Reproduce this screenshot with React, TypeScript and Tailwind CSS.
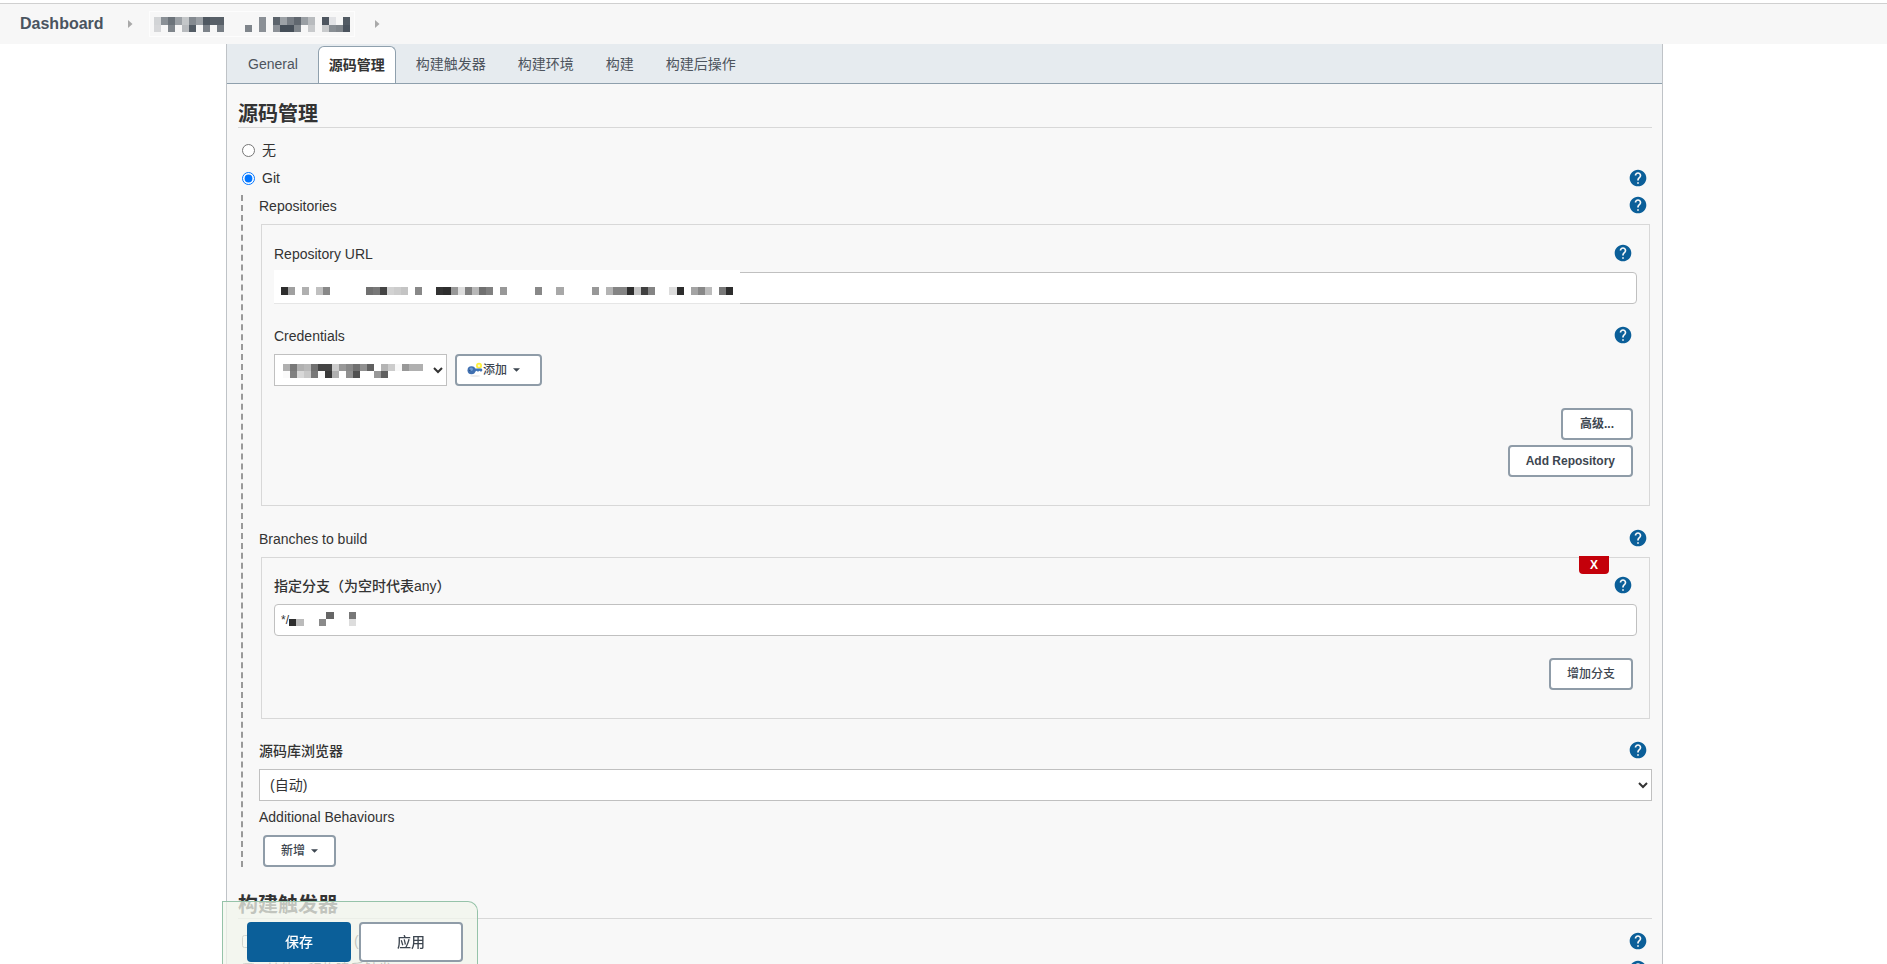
import React, { useState } from "react";
import { MdHelp } from "react-icons/md";

type Cell = [col: number, row: number, color: string];

const tabs = ["General", "源码管理", "构建触发器", "构建环境", "构建", "构建后操作"];

// "_" leaves a cell empty, everything else is a hex grey (or full hex colour)
const toCells = (rows: string[]): Cell[] =>
  rows.flatMap((row, r) =>
    row
      .split(" ")
      .map((c, i): Cell => [i, r, c])
      .filter(([, , c]) => c !== "_")
      .map(([i, y, c]): Cell => [i, y, c.length === 2 ? `#${c}${c}${c}` : `#${c}`])
  );

const projectCells = toCells([
  "d2d4d6 8a9096 6c737a 9ca1a6 c4c7c9 848a90 9ca1a6 4f5861 586068 586068 _ _ _ _ _ 8b9096 _ 5c646c 9ca1a6 787e85 60676f 9a9fa4 b8bbbe _ 4e5660 e2e3e6 _ 525b64",
  "d6d7d9 _ 80868c _ b8bbbe 535c65 _ 7c8289 _ 777e85 _ _ _ 7f858b _ 8b9096 _ 8c9197 454e58 454e58 80868c _ c8cacc _ c8cacc 888e94 80868c 4a535d",
]);

const urlCells = toCells([
  "2d a0 _ b0 _ c0 88 _ _ _ _ _ 70 78 44 d2 cc c4 _ 88 _ _ 33 2d 98 dd 80 b8 70 80 _ 98 _ _ _ _ 88 _ _ a8 _ _ _ _ 98 _ b4 84 84 2d c4 40 84 _ _ dc 2d _ a4 88 bc _ 78 2d",
]);

const credentialCells = toCells([
  "b0 78 b0 b8 70 44 44 cc 98 88 70 90 60 _ b4 cc f8 98 b0 b0",
  "fa 80 d8 c8 78 fa 38 b0 _ 90 50 _ _ 98 60",
]);

const branchCells = toCells(["_ _ _ _ _ 66 _ _ 77", "2d bb _ _ 8a _ _ _ dd"]);

const Mosaic: React.FC<{
  cells: Cell[];
  cols: number;
  rows: number;
  className: string;
}> = ({ cells, cols, rows, className }) => (
  <svg
    className={className}
    viewBox={`0 0 ${cols} ${rows}`}
    preserveAspectRatio="none"
    shapeRendering="crispEdges"
    aria-hidden="true"
  >
    {cells.map(([x, y, fill]) => (
      <rect key={`${x}-${y}`} x={x} y={y} width="1" height="1" fill={fill} />
    ))}
  </svg>
);

const HelpButton: React.FC<{ topic: string }> = ({ topic }) => (
  <button type="button" aria-label={`Help: ${topic}`} className="mr-1 text-[#0b5f99]">
    <MdHelp size={20} />
  </button>
);

const Caret: React.FC = () => (
  <svg width="7" height="4" viewBox="0 0 8 4" aria-hidden="true">
    <path d="M0 0h8L4 4z" fill="currentColor" />
  </svg>
);

const Chevron: React.FC = () => (
  <svg width="5" height="8" viewBox="0 0 5 8" aria-hidden="true">
    <path d="M0 0l4.5 4L0 8z" fill="#a9a9a9" />
  </svg>
);

const KeyIcon: React.FC = () => (
  <svg width="16" height="16" viewBox="0 0 16 16" aria-hidden="true">
    <ellipse cx="8" cy="14" rx="5" ry="1" fill="#ececec" />
    <circle cx="12" cy="3.8" r="3" fill="#fff03c" />
    <circle cx="12" cy="3.8" r="1.2" fill="#fffbd0" />
    <path d="M6 6.5h8.5l1 1.5-1 1.5h-1l-1-.8-1 .8h-1l-1-.8-1 .8H6z" fill="#3f74b8" />
    <circle cx="4.5" cy="8.3" r="4" fill="#3f6fb0" />
    <circle cx="4.2" cy="7.2" r="1.8" fill="#6f9bd2" />
    <circle cx="2.8" cy="8.3" r=".8" fill="#24497c" />
  </svg>
);

const buttonClass =
  "flex h-8 items-center rounded border-2 border-[#8f9ca8] bg-white text-xs text-[#3d4650]";

const Field: React.FC<{
  label: string;
  htmlFor?: string;
  help?: boolean;
  className?: string;
}> = ({ label, htmlFor, help = true, className = "" }) => (
  <div className={`mb-[7px] flex h-[22px] items-start justify-between leading-[22px] ${className}`}>
    {htmlFor ? (
      <label htmlFor={htmlFor} className="font-medium">
        {label}
      </label>
    ) : (
      <span className="font-medium">{label}</span>
    )}
    {help && <HelpButton topic={label} />}
  </div>
);

const SectionTitle: React.FC<{ children: React.ReactNode }> = ({ children }) => (
  <h2 className="mb-2 border-b border-[#d8d8d8] pt-[18px] pb-px text-xl leading-6 font-bold">
    {children}
  </h2>
);

export default function App() {
  const [activeTab, setActiveTab] = useState(1);
  const [scm, setScm] = useState("git");

  return (
    <div className="h-screen overflow-hidden bg-white font-['Liberation_Sans','Noto_Sans_CJK_SC',sans-serif] text-sm text-[#333]">
      <nav className="mt-[3px] flex h-[41px] items-center border-t border-[#d0d0d0] bg-[#f7f7f7] pl-5">
        <a href="#" className="text-base font-bold text-[#4a545f]">
          Dashboard
        </a>
        <span className="ml-6">
          <Chevron />
        </span>
        <a
          href="#"
          aria-label="Project"
          className="mr-5 ml-4 flex h-[26px] items-center border border-[#fdfdfd] px-1"
        >
          <Mosaic cells={projectCells} cols={28} rows={2} className="h-[15px] w-[196px]" />
        </a>
        <Chevron />
      </nav>

      <main className="mr-[224px] ml-[226px] border-x border-[#bfc3c7] bg-[#f8f8f8]">
        <div className="flex h-10 items-end border-b border-[#8fa0ad] bg-[#e6ebef] pl-[5px]">
          {tabs.map((tab, i) => (
            <button
              key={tab}
              type="button"
              onClick={() => setActiveTab(i)}
              className={
                i === activeTab
                  ? "mx-1 h-[37px] rounded-t-md border border-b-0 border-[#8fa0ad] bg-white px-[10px] font-bold"
                  : "h-[37px] px-4 pb-[2px] text-[#4d545d]"
              }
            >
              {tab}
            </button>
          ))}
        </div>

        <form className="pr-[10px] pl-[11px]" onSubmit={(e) => e.preventDefault()}>
          <SectionTitle>源码管理</SectionTitle>
          <div className="flex h-7 items-center pl-1">
            <input
              type="radio"
              id="scm-none"
              name="scm"
              className="mr-[7px] size-[13px]"
              checked={scm === "none"}
              onChange={() => setScm("none")}
            />
            <label htmlFor="scm-none">无</label>
          </div>
          <div className="flex h-7 items-center pl-1">
            <input
              type="radio"
              id="scm-git"
              name="scm"
              className="mr-[7px] size-[13px]"
              checked={scm === "git"}
              onChange={() => setScm("git")}
            />
            <label htmlFor="scm-git" className="flex-1">
              Git
            </label>
            <HelpButton topic="Git" />
          </div>

          <div className="mt-[3px] ml-[3px] border-l-2 border-dashed border-[#999] pl-4">
            <Field label="Repositories" />
            <div className="mr-[2px] ml-[2px] border border-[#d8d8d8] px-3 pt-[18px] pb-7">
              <Field label="Repository URL" htmlFor="repo-url" />
              <div className="relative">
                <input
                  id="repo-url"
                  type="text"
                  className="block h-8 w-full rounded border border-[#c0c0c0] bg-white px-[7px]"
                />
                <div className="pointer-events-none absolute -top-[2px] left-0 flex h-[34px] w-[466px] items-center border-b border-[#e6e6e6] bg-white pl-[7px]">
                  <Mosaic cells={urlCells} cols={64} rows={1} className="mt-2 h-2 w-[452px]" />
                </div>
              </div>

              <Field label="Credentials" htmlFor="credentials" className="mt-[21px]" />
              <div className="flex gap-2">
                <div className="relative">
                  <select
                    id="credentials"
                    className="block h-8 w-[173px] border border-[#c0c0c0] bg-white"
                  >
                    <option value="" />
                  </select>
                  <Mosaic
                    cells={credentialCells}
                    cols={20}
                    rows={2}
                    className="pointer-events-none absolute top-[10px] left-[9px] h-[14px] w-[140px]"
                  />
                </div>
                <button type="button" className={`${buttonClass} pr-5 pl-[10px] font-medium`}>
                  <KeyIcon />
                  <span className="mr-[6px]">添加</span>
                  <Caret />
                </button>
              </div>

              <div className="mt-[22px] mr-1 flex flex-col items-end gap-[5px]">
                <button
                  type="button"
                  className={`${buttonClass} min-w-[72px] justify-center px-4 font-bold`}
                >
                  高级...
                </button>
                <button type="button" className={`${buttonClass} px-4 font-bold`}>
                  Add Repository
                </button>
              </div>
            </div>

            <Field label="Branches to build" className="mt-[22px]" />
            <div className="relative mr-[2px] ml-[2px] border border-[#d8d8d8] px-3 pt-[17px] pb-7">
              <button
                type="button"
                className="absolute -top-[2px] right-10 h-[18px] w-[30px] rounded-b bg-[#c4000a] text-xs font-bold text-white"
              >
                X
              </button>
              <Field label="指定分支（为空时代表any）" htmlFor="branch" />
              <div className="relative">
                <input
                  id="branch"
                  type="text"
                  defaultValue="*/"
                  className="block h-8 w-full rounded border border-[#c0c0c0] bg-white px-[6px] text-xs"
                />
                <Mosaic
                  cells={branchCells}
                  cols={9}
                  rows={2}
                  className="pointer-events-none absolute top-2 left-[15px] h-[14px] w-[67px]"
                />
              </div>
              <div className="mt-[22px] mr-1 flex justify-end">
                <button type="button" className={`${buttonClass} px-4 font-medium`}>
                  增加分支
                </button>
              </div>
            </div>

            <Field label="源码库浏览器" htmlFor="browser" className="mt-[21px]" />
            <select
              id="browser"
              className="block h-8 w-full border border-[#c0c0c0] bg-white pl-[6px]"
            >
              <option>(自动)</option>
            </select>

            <Field label="Additional Behaviours" help={false} className="mt-[5px]" />
            <button type="button" className={`${buttonClass} ml-1 gap-[6px] px-4 font-medium`}>
              新增
              <Caret />
            </button>
          </div>

          <div className="mt-2">
            <SectionTitle>构建触发器</SectionTitle>
            <div className="flex h-7 items-center pl-1">
              <input type="checkbox" id="trigger-remote" className="mr-[11px] size-[13px]" />
              <label htmlFor="trigger-remote" className="flex-1">
                触发远程构建 (例如,使用脚本)
              </label>
              <HelpButton topic="触发远程构建" />
            </div>
            <div className="flex h-7 items-center pl-1">
              <input type="checkbox" id="trigger-upstream" className="mr-[11px] size-[13px]" />
              <label htmlFor="trigger-upstream" className="flex-1">
                其他工程构建后触发
              </label>
              <HelpButton topic="其他工程构建后触发" />
            </div>
          </div>
        </form>
      </main>

      <div className="fixed bottom-0 left-[222px] flex gap-2 rounded-tr-[10px] border border-b-0 border-[#96c3a9] bg-[#f1f5ec]/75 pt-5 pr-[14px] pb-[2px] pl-6">
        <button
          type="button"
          className="h-10 w-[104px] rounded bg-[#0b5f99] text-sm font-medium text-white"
        >
          保存
        </button>
        <button
          type="button"
          className="h-10 w-[104px] rounded border-2 border-[#8f9ca8] bg-white text-sm font-medium text-[#3d4650]"
        >
          应用
        </button>
      </div>
    </div>
  );
}
